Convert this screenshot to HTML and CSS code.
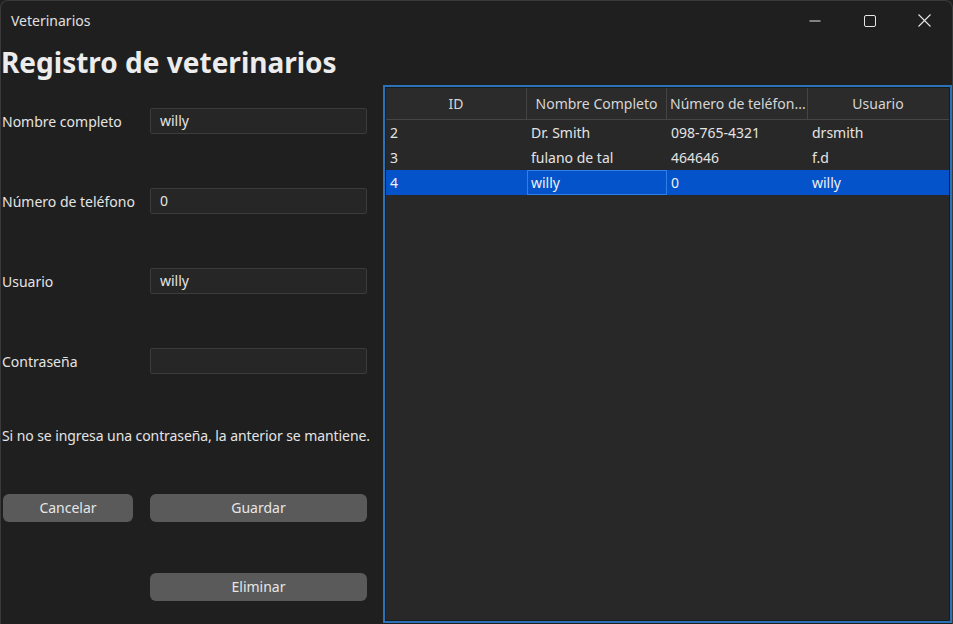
FILE: index.html
```html
<!DOCTYPE html>
<html lang="es">
<head>
<meta charset="utf-8">
<title>Veterinarios</title>
<link rel="stylesheet" href="styles.css">
</head>
<body>
<div class="window">
  <div class="titlebar">
    <span class="wtitle">Veterinarios</span>
    <div class="controls">
      <div class="ctl"><svg width="12" height="12" viewBox="0 0 12 12"><path d="M0.5 6h11" stroke="#e6e6e6" stroke-width="1"/></svg></div>
      <div class="ctl"><svg width="12" height="12" viewBox="0 0 12 12"><rect x="0.5" y="0.5" width="11" height="11" rx="1.5" fill="none" stroke="#e6e6e6" stroke-width="1"/></svg></div>
      <div class="ctl"><svg width="13" height="13" viewBox="0 0 13 13"><path d="M0.5 0.5l12 12M12.5 0.5l-12 12" stroke="#e6e6e6" stroke-width="1.1"/></svg></div>
    </div>
  </div>
  <div class="content">
    <div class="left">
      <h1 class="heading">Registro de veterinarios</h1>
      <div class="form">
        <div class="row r1"><label class="lbl">Nombre completo</label><div class="input">willy</div></div>
        <div class="row"><label class="lbl">Número de teléfono</label><div class="input">0</div></div>
        <div class="row"><label class="lbl">Usuario</label><div class="input">willy</div></div>
        <div class="row"><label class="lbl">Contraseña</label><div class="input"></div></div>
        <p class="hint">Si no se ingresa una contraseña, la anterior se mantiene.</p>
        <div class="btnrow"><button class="btn small">Cancelar</button><button class="btn wide">Guardar</button></div>
        <div class="btnrow last"><span class="spacer"></span><button class="btn wide">Eliminar</button></div>
      </div>
    </div>
    <div class="tablewrap">
      <div class="table">
        <div class="thead">
          <div class="th">ID</div>
          <div class="th">Nombre Completo</div>
          <div class="th left-al">Número de teléfon...</div>
          <div class="th">Usuario</div>
        </div>
        <div class="tr"><div class="td">2</div><div class="td">Dr. Smith</div><div class="td">098-765-4321</div><div class="td">drsmith</div></div>
        <div class="tr"><div class="td">3</div><div class="td">fulano de tal</div><div class="td">464646</div><div class="td">f.d</div></div>
        <div class="tr sel"><div class="td">4</div><div class="td focus">willy</div><div class="td">0</div><div class="td">willy</div></div>
      </div>
    </div>
  </div>
</div>
</body>
</html>
```

FILE: styles.css
```css
* { box-sizing: border-box; }
html, body { margin: 0; padding: 0; background: #1f1f1f; }
body { font-family: "Noto Sans", "Open Sans", sans-serif; color: #e4e4e4; font-size: 14px; }
.window {
  width: 953px; height: 624px; background: #1f1f1f;
  border: 1px solid #3a3a3a; border-bottom: none;
  border-radius: 8px 8px 0 0; overflow: hidden;
  display: flex; flex-direction: column;
}
.titlebar { height: 39px; display: flex; align-items: center; flex-shrink: 0; }
.wtitle { padding-left: 10px; font-size: 14px; color: #e0e0e0; flex: 1; }
.controls { display: flex; height: 100%; }
.ctl { width: 55px; height: 100%; display: flex; align-items: center; justify-content: center; }
.content { display: flex; flex: 1; }
.left { width: 381px; padding-left: 0; flex-shrink: 0; }
.heading { margin: 0; height: 45px; font-size: 28px; font-weight: 700; line-height: 44px; color: #ececec; }
.form { display: flex; flex-direction: column; }
.row { display: flex; align-items: center; height: 26px; margin-top: 54px; padding-left: 1px; }
.row.r1 { margin-top: 23px; }
.lbl { width: 148px; flex-shrink: 0; }
.input { width: 217px; height: 26px; background: #262626; border: 1px solid #3b3b3b; border-radius: 2px; padding-left: 9px; line-height: 24px; }
.hint { margin: 52px 0 0 1px; line-height: 20px; white-space: nowrap; letter-spacing: -0.08px; }
.btnrow { display: flex; margin-top: 48px; padding-left: 2px; }
.btnrow.last { margin-top: 51px; }
.btn {
  height: 28px; border: none; border-radius: 6px; background: #5a5a5a; color: #e6e6e6;
  font-family: inherit; font-size: 14px; padding: 0; line-height: 28px;
}
.btn.small { width: 130px; margin-right: 17px; }
.spacer { width: 147px; }
.btn.wide { width: 217px; }
.tablewrap { margin-top: 45px; margin-left: 1px; width: 569px; height: 538px; border: 2px solid #2a73b8; background: #282828; }
.table { border: 1px solid #1b1b1b; height: 100%; }
.thead { display: flex; height: 32px; border-bottom: 1px solid #454545; background: #2b2b2b; }
.th { width: 141px; text-align: center; line-height: 31px; color: #d6d6d6; border-right: 1px solid #444; white-space: nowrap; overflow: hidden; }
.th:nth-child(2) { width: 140px; }
.th:nth-child(4) { border-right: none; width: 140px; }
.th.left-al { text-align: left; padding-left: 3px; }
.tr { display: flex; height: 25px; }
.td { width: 141px; line-height: 25px; padding-left: 4px; white-space: nowrap; }
.td:nth-child(2) { width: 140px; }
.tr.sel { background: #0453cb; color: #f0f0f0; }
.td.focus { border: 1px solid #2d80ea; padding-left: 3px; line-height: 23px; }
```
